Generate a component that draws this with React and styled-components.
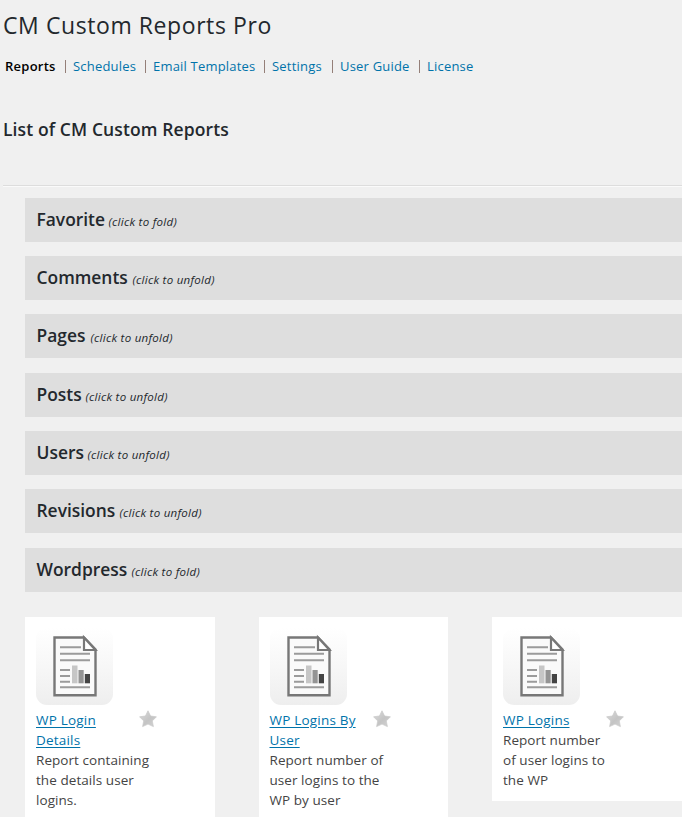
import styled, { createGlobalStyle } from "styled-components";

const GlobalStyle = createGlobalStyle`
  html, body {
    margin: 0;
    background: #f0f0f0;
    overflow: hidden;
  }
  * {
    box-sizing: border-box;
  }
`;
const Page = styled.div`
  width: 100%;
  height: 817px;
  overflow: hidden;
  padding-left: 3px;
  background: #f0f0f0;
  color: #23282d;
  font-family: "Open Sans", "Noto Sans", sans-serif;
  font-size: 13px;
`;
const Title = styled.h1`
  margin: 0;
  padding-top: 9px;
  height: 56px;
  font-size: 23px;
  font-weight: 400;
  line-height: 32px;
  letter-spacing: 0.58px;
  white-space: nowrap;
`;
const Nav = styled.nav`
  display: flex;
  height: 20px;
  padding-left: 2px;
  line-height: 20px;
`;
const NavItem = styled.div`
  width: ${(props) => props.$width}px;
  display: flex;
  justify-content: space-between;
  flex-shrink: 0;
  padding-right: 7px;
  white-space: nowrap;
`;
const NavLink = styled.a`
  color: ${(props) => (props.$current ? "#000" : "#0073aa")};
  font-weight: ${(props) => (props.$current ? 600 : 400)};
  letter-spacing: ${(props) => (props.$current ? 0.25 : 0.2)}px;
`;
const Divider = styled.span`
  width: 1px;
  height: 13px;
  margin-top: 4px;
  background: #947f78;
`;
const Subtitle = styled.h2`
  margin: 0;
  padding-top: 41px;
  height: 109px;
  font-size: 17.5px;
  font-weight: 600;
  line-height: 24px;
  letter-spacing: 0.11px;
  white-space: nowrap;
`;
const Rule = styled.hr`
  margin: 0;
  border: 0;
  border-top: 1px solid #ddd;
  border-bottom: 1px solid #fafafa;
`;
const Content = styled.main`
  padding: 10.7px 0 0 22px;
`;
const Section = styled.section`
  display: flex;
  align-items: baseline;
  height: 44px;
  margin-bottom: 14.33px;
  padding: 8px 0 0 11.5px;
  background: #dedede;
  white-space: nowrap;
`;
const SectionName = styled.h3`
  margin: 0;
  width: ${(props) => props.$width}px;
  font-size: 17.4px;
  font-weight: 600;
  line-height: 26px;
`;
const Note = styled.em`
  font-size: 11.5px;
  font-weight: 500;
  line-height: 16px;
  letter-spacing: 0.28px;
`;
const Cards = styled.div`
  display: grid;
  grid-template-columns: repeat(3, 189.5px);
  column-gap: 44px;
  align-items: start;
  margin-top: 25px;
`;
const Card = styled.article`
  display: flex;
  flex-direction: column;
  min-height: ${(props) => props.$height}px;
  padding: 11px 0 0 11px;
  background: #fff;
  color: #444;
  font-size: 13.5px;
  line-height: 20px;
`;
const IconBox = styled.div`
  width: 77px;
  height: 77px;
  margin-bottom: 5px;
  border-radius: 11px;
  background: linear-gradient(#fff, #f7f7f7 50%, #eee);
`;
const CardBody = styled.div`
  display: flex;
  justify-content: space-between;
  width: 121px;
  white-space: nowrap;
`;
const CardLink = styled.a`
  color: #0073aa;
  letter-spacing: 0.2px;
  text-decoration: underline;
  text-underline-offset: 2px;
`;
const Description = styled.p`
  margin: 0;
  letter-spacing: 0.06px;
  white-space: nowrap;
`;

const navItems = [
  { label: "Reports", width: 68 },
  { label: "Schedules", width: 80 },
  { label: "Email Templates", width: 119 },
  { label: "Settings", width: 68 },
  { label: "User Guide", width: 87 },
  { label: "License", width: 60 },
];

const sections = [
  { name: "Favorite", width: 72, note: "(click to fold)" },
  { name: "Comments", width: 96, note: "(click to unfold)" },
  { name: "Pages", width: 54, note: "(click to unfold)" },
  { name: "Posts", width: 49, note: "(click to unfold)" },
  { name: "Users", width: 51, note: "(click to unfold)" },
  { name: "Revisions", width: 83, note: "(click to unfold)" },
  { name: "Wordpress", width: 95, note: "(click to fold)" },
];

const reports = [
  {
    title: ["WP Login", "Details"],
    text: ["Report containing", "the details user", "logins."],
    height: 204,
  },
  {
    title: ["WP Logins By", "User"],
    text: ["Report number of", "user logins to the", "WP by user"],
    height: 204,
  },
  {
    title: ["WP Logins"],
    text: ["Report number", "of user logins to", "the WP"],
    height: 184,
  },
];

function ReportIcon() {
  return (
    <svg width="77" height="77" viewBox="0 0 77 77" fill="none">
      <path d="M18.5 9.5H48L59.5 21.5V67.2H18.5Z" fill="#fafafa" stroke="#777" strokeWidth="2.4" />
      <path d="M48 9.5V22H59.5Z" fill="#fff" stroke="#777" strokeWidth="2.2" />
      <path
        d="M24 19.3H45M24 25.7H54M24 32.3H54M24 42H34M24 48H34M24 53.8H34M24 59.3H54"
        stroke="#9b9b9b"
        strokeWidth="2"
      />
      <path d="M36 37.5H41.5V55.3H36Z" fill="#c6c6c6" />
      <path d="M42.5 42H47.7V55.3H42.5Z" fill="#949494" />
      <path d="M48.8 46H54V55.3H48.8Z" fill="#444" />
    </svg>
  );
}

function StarIcon() {
  return (
    <svg width="18" height="18" viewBox="0 0 18 18">
      <defs>
        <linearGradient id="star" x1="0" y1="0" x2="1" y2="1">
          <stop offset="0" stopColor="#dcdcdc" />
          <stop offset="0.55" stopColor="#c4c4c4" />
          <stop offset="1" stopColor="#d4d4d4" />
        </linearGradient>
      </defs>
      <path
        d="M9 .8 11.6 6 17.4 6.8 13.3 10.9 14.4 16.6 9 14.1 3.6 16.6 4.7 10.9 .6 6.8 6.4 6Z"
        fill="url(#star)"
        stroke="#c8c8c8"
        strokeWidth=".7"
        strokeLinejoin="round"
      />
    </svg>
  );
}

function App() {
  return (
    <Page>
      <GlobalStyle />
      <Title>CM Custom Reports Pro</Title>
      <Nav>
        {navItems.map((item, index) => (
          <NavItem key={item.label} $width={item.width}>
            <NavLink $current={index === 0}>{item.label}</NavLink>
            {index < navItems.length - 1 && <Divider />}
          </NavItem>
        ))}
      </Nav>
      <Subtitle>List of CM Custom Reports</Subtitle>
      <Rule />
      <Content>
        {sections.map((section) => (
          <Section key={section.name}>
            <SectionName $width={section.width}>{section.name}</SectionName>
            <Note>{section.note}</Note>
          </Section>
        ))}
        <Cards>
          {reports.map((report) => (
            <Card key={report.title[0]} $height={report.height}>
              <IconBox>
                <ReportIcon />
              </IconBox>
              <CardBody>
                <CardLink>
                  {report.title.map((line) => (
                    <div key={line}>{line}</div>
                  ))}
                </CardLink>
                <StarIcon />
              </CardBody>
              <Description>
                {report.text.map((line) => (
                  <span key={line}>
                    {line}
                    <br />
                  </span>
                ))}
              </Description>
            </Card>
          ))}
        </Cards>
      </Content>
    </Page>
  );
}

export default App;
